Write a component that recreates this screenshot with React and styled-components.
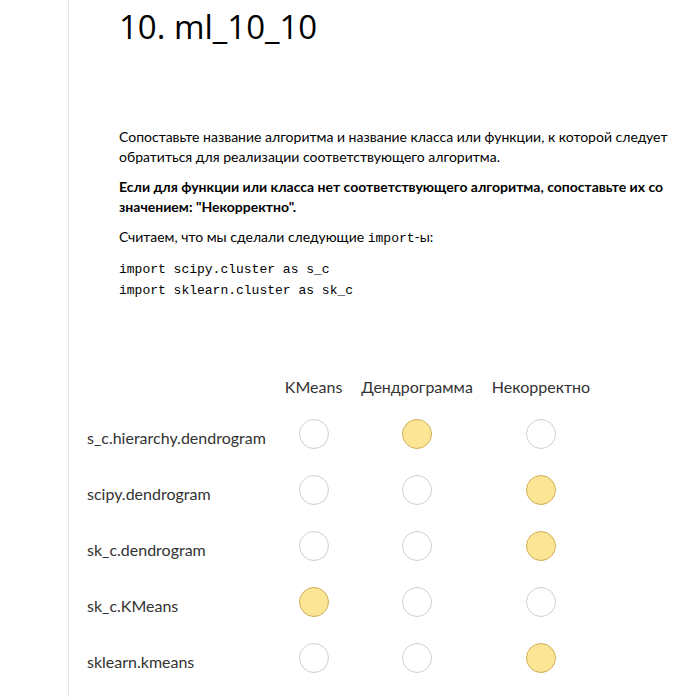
import styled, { createGlobalStyle } from "styled-components";

const GlobalStyle = createGlobalStyle`
  body {
    margin: 0;
    background: #fff;
    color: #000;
    font-family: Lato, "Open Sans", sans-serif;
  }
`;

const rows = [
  { label: "s_c.hierarchy.dendrogram", picked: 1 },
  { label: "scipy.dendrogram", picked: 2 },
  { label: "sk_c.dendrogram", picked: 2 },
  { label: "sk_c.KMeans", picked: 0 },
  { label: "sklearn.kmeans", picked: 2 },
];

const columns = ["KMeans", "Дендрограмма", "Некорректно"];

function App() {
  return (
    <>
      <GlobalStyle />
      <Page>
        <Sheet>
          <Title>10. ml_10_10</Title>
          <Body>
            <p>
              Сопоставьте название алгоритма и название класса или функции, к
              которой следует обратиться для реализации соответствующего
              алгоритма.
            </p>
            <p>
              <b>
                Если для функции или класса нет соответствующего алгоритма,
                сопоставьте их со значением: "Некорректно".
              </b>
            </p>
            <p>
              Считаем, что мы сделали следующие <code>import</code>-ы:
            </p>
            <Code>
              {"import scipy.cluster as s_c\nimport sklearn.cluster as sk_c"}
            </Code>
          </Body>
          <Matrix>
            <span />
            {columns.map((c) => (
              <HeadCell key={c}>{c}</HeadCell>
            ))}
            {rows.map((r) => (
              <Row key={r.label}>
                <Label>{r.label}</Label>
                {columns.map((c, i) => (
                  <RadioCell key={c}>
                    <Radio checked={r.picked === i} />
                  </RadioCell>
                ))}
              </Row>
            ))}
          </Matrix>
        </Sheet>
      </Page>
    </>
  );
}

const Page = styled.div`
  padding-left: 68px;
  min-height: 697px;
`;

const Sheet = styled.main`
  border-left: 1px solid #e3e3e3;
  min-height: 697px;
  padding-left: 50px;
`;

const Title = styled.h1`
  margin: 0;
  padding-top: 4px;
  font-family: "Open Sans", sans-serif;
  font-weight: 400;
  font-size: 33px;
  line-height: 46px;
  height: 48px;
`;

const Body = styled.div`
  padding-top: 75px;
  font-size: 14px;
  line-height: 20px;
  max-width: 560px;

  & > p {
    margin: 0 0 10px;
  }

  code {
    font-family: "Liberation Mono", monospace;
    font-size: 13px;
  }
`;

const Code = styled.pre`
  margin: 0;
  font-family: "Liberation Mono", monospace;
  font-size: 13px;
  line-height: 21px;
`;

const Matrix = styled.div`
  margin-top: 76px;
  margin-left: -32px;
  display: grid;
  grid-template-columns: auto auto auto auto;
  justify-content: start;
  column-gap: 19px;
  font-size: 16px;
  color: #333;
`;

const Row = styled.div`
  display: contents;
`;

const HeadCell = styled.div`
  height: 32px;
  text-align: center;
`;

const Label = styled.div`
  height: 56px;
  display: flex;
  align-items: center;
`;

const RadioCell = styled.div`
  height: 56px;
  display: flex;
  align-items: center;
  justify-content: center;
`;

const Radio = styled.span`
  width: 30px;
  height: 30px;
  margin-bottom: 7px;
  box-sizing: border-box;
  border-radius: 50%;
  border: 1px solid ${({ checked }) => (checked ? "#cfae5a" : "#cfcfcf")};
  background: ${({ checked }) => (checked ? "#fde596" : "#fff")};
`;

export default App;
